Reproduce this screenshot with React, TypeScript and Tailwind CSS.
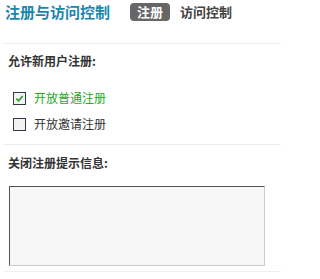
export default function App() {
  const font = { fontFamily: '"Noto Sans CJK SC", "Liberation Sans", sans-serif' };
  return (
    <div className="w-[281px] h-[279px] bg-white text-[#333]" style={font}>
      <div className="flex items-center h-[22px] pl-[5px] pt-px">
        <h2 className="text-[15px] leading-none font-bold text-[#1a86ad]">注册与访问控制</h2>
        <span className="ml-[20px] h-[18px] px-[7px] rounded-[4px] bg-[#666] text-white text-[13px] font-bold leading-[18px]">注册</span>
        <span className="ml-[10px] text-[13px] font-bold text-[#444] leading-none">访问控制</span>
      </div>

      <div className="mt-[21px] ml-[3px] border-t border-[#eee]" />
      <div className="pl-[8px] pt-[10px] text-[12px] font-bold leading-[14px]">允许新用户注册:</div>

      <div className="flex flex-col gap-[12px] pl-[13px] mt-[23px] text-[12px] leading-[14px]">
        <label className="flex items-center gap-[8px] text-[#22aa22]">
          <span className="w-[13px] h-[13px] border border-[#2f3b4a] bg-[#f2f2f2] flex items-center justify-center">
            <svg viewBox="0 0 10 10" className="w-[9px] h-[9px]">
              <path d="M1.5 5.2 L4 7.6 L8.5 2.2" fill="none" stroke="#2e9a2e" strokeWidth="1.8" />
            </svg>
          </span>
          开放普通注册
        </label>
        <label className="flex items-center gap-[8px] text-[#333]">
          <span className="w-[13px] h-[13px] border border-[#2f3b4a] bg-[#f2f2f2]" />
          开放邀请注册
        </label>
      </div>

      <div className="mt-[13px] ml-[3px] border-t border-[#eee]" />
      <div className="pl-[8px] pt-[11px] text-[12px] font-bold leading-[14px]">关闭注册提示信息:</div>

      <div className="pl-[9px] mt-[16px]">
        <textarea className="block w-[256px] h-[80px] bg-[#f7f7f7] border border-t-[#555] border-l-[#555] border-b-[#ccc] border-r-[#ccc] resize-none outline-none" />
      </div>
      <div className="mt-[5px] ml-[3px] border-t border-[#f0f0f0]" />
    </div>
  );
}
